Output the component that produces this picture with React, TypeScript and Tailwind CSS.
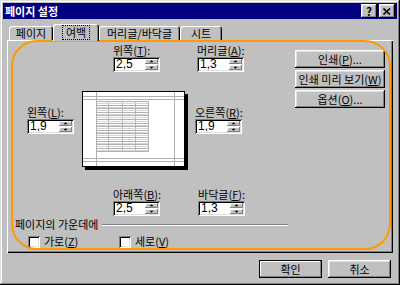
import type { ReactNode } from 'react'

// classic 3D edges
const raised =
  'shadow-[inset_-1px_-1px_0_#000,inset_1px_1px_0_#fff,inset_-2px_-2px_0_#808080,inset_2px_2px_0_#dfdfdf]'
const sunken =
  'shadow-[inset_1px_1px_0_#808080,inset_-1px_-1px_0_#fff,inset_2px_2px_0_#000,inset_-2px_-2px_0_#dfdfdf]'

function Label({ pre, mn, post = '' }: { pre: string; mn: string; post?: string }) {
  return (
    <span className="whitespace-nowrap">
      {pre}(<u>{mn}</u>){post}
    </span>
  )
}

function SpinArrows() {
  return (
    <svg width="13" height="11" viewBox="0 0 13 11" className="block">
      <rect x="0" y="0" width="13" height="5" fill="#c0c0c0" />
      <rect x="0" y="6" width="13" height="5" fill="#c0c0c0" />
      <path d="M0 4.5H12.5V0" stroke="#808080" fill="none" />
      <path d="M0 10.5H12.5V6" stroke="#808080" fill="none" />
      <path d="M0.5 4V0.5H12" stroke="#fff" fill="none" />
      <path d="M0.5 10V6.5H12" stroke="#fff" fill="none" />
      <path d="M4.5 3.2h4l-2 -2z" fill="#000" />
      <path d="M4.5 7.8h4l-2 2z" fill="#000" />
    </svg>
  )
}

function Spin({ value }: { value: string }) {
  return (
    <div className={`flex h-[15px] w-[47px] bg-white p-[2px] ${sunken}`}>
      <span className="flex-1 pl-[1px] text-[12px] leading-[11px] [font-family:'Liberation_Sans',sans-serif]">
        {value}
      </span>
      <SpinArrows />
    </div>
  )
}

function Field({ label, value }: { label: ReactNode; value: string }) {
  return (
    <div className="flex flex-col">
      <div className="h-[13px] leading-[12px]">{label}</div>
      <Spin value={value} />
    </div>
  )
}

function Button({ children, w, primary }: { children: ReactNode; w: string; primary?: boolean }) {
  return (
    <div
      className={`flex h-[18px] items-center justify-center bg-[#c0c0c0] ${w} ${
        primary
          ? 'border border-black shadow-[inset_-1px_-1px_0_#808080,inset_1px_1px_0_#fff]'
          : raised
      }`}
    >
      {children}
    </div>
  )
}

function Check({ label }: { label: ReactNode }) {
  return (
    <div className="flex items-center gap-[4px]">
      <div className={`h-[12px] w-[12px] bg-white ${sunken}`} />
      {label}
    </div>
  )
}

function Preview() {
  const rows = Array.from({ length: 15 }, (_, i) => Math.round(10 + i * 3.6) + 0.5)
  const cols = [14.5, 26.5, 40.5, 53.5, 66.5]
  return (
    <svg width="106" height="79" viewBox="0 0 106 79" className="block">
      <rect x="3" y="3" width="103" height="76" fill="#000" />
      <rect x="0.5" y="0.5" width="102" height="75" fill="#fff" stroke="#000" />
      <g stroke="#b0b0b0" strokeWidth="1">
        <line x1="1" x2="102" y1="5.5" y2="5.5" />
        <line x1="1" x2="102" y1="8.5" y2="8.5" />
        <line x1="1" x2="102" y1="67.5" y2="67.5" />
        <line x1="1" x2="102" y1="70.5" y2="70.5" />
        <line x1="14.5" x2="14.5" y1="1" y2="75" />
        <line x1="92.5" x2="92.5" y1="1" y2="75" />
        {cols.map((x) => (
          <line key={x} x1={x} x2={x} y1="10" y2="61" />
        ))}
        {rows.map((y) => (
          <line key={y} x1="14.5" x2="66.5" y1={y} y2={y} />
        ))}
      </g>
      <g stroke="#d4d4d4" strokeWidth="1">
        {rows.slice(0, -1).map((y) => (
          <line key={y} x1="15" x2="66" y1={y + 2} y2={y + 2} />
        ))}
      </g>
    </svg>
  )
}

function Tab({ children, w, active }: { children: ReactNode; w: string; active?: boolean }) {
  return (
    <div
      className={`flex items-center justify-center rounded-t-[3px] bg-[#c0c0c0] shadow-[inset_1px_1px_0_#fff,inset_-1px_0_0_#000,inset_-2px_0_0_#808080] ${w} ${
        active ? 'relative z-10 -mb-[1px] h-[17px]' : 'h-[14px]'
      }`}
    >
      {children}
    </div>
  )
}

export default function App() {
  return (
    <div className="relative h-[285px] w-[400px] overflow-hidden bg-[#c0c0c0] p-[3px] text-[11px] leading-[13px] text-black [font-family:'Noto_Sans_CJK_KR','Liberation_Sans',sans-serif] shadow-[inset_-1px_-1px_0_#000,inset_1px_1px_0_#dfdfdf,inset_-2px_-2px_0_#808080,inset_2px_2px_0_#fff]">
      {/* title bar */}
      <div className="flex h-[16px] items-center bg-[#000080] pl-[2px] pr-[2px]">
        <span className="flex-1 font-bold text-white">페이지 설정</span>
        <div className="flex gap-[2px]">
          <div className={`flex h-[14px] w-[16px] items-center justify-center bg-[#c0c0c0] font-bold ${raised}`}>?</div>
          <div className={`flex h-[14px] w-[16px] items-center justify-center bg-[#c0c0c0] ${raised}`}>
            <svg width="8" height="7" viewBox="0 0 8 7">
              <path d="M0.5 0.5L7 6.5M7 0.5L0.5 6.5" stroke="#000" strokeWidth="1.6" />
            </svg>
          </div>
        </div>
      </div>

      <div className="mx-[4px] mt-[5px]">
        {/* tabs */}
        <div className="flex h-[16px] items-end pl-[2px]">
          <Tab w="w-[44px]">페이지</Tab>
          <Tab w="w-[46px]" active>
            <span className="px-[3px] outline outline-1 outline-dotted outline-black">여백</span>
          </Tab>
          <Tab w="w-[81px]">머리글/바닥글</Tab>
          <Tab w="w-[42px]">시트</Tab>
        </div>

        {/* panel */}
        <div className="flex h-[213px] gap-[5px] pl-[8px] pt-[4px] shadow-[inset_1px_1px_0_#fff,inset_-1px_-1px_0_#000,inset_-2px_-2px_0_#808080]">
          <div className="flex w-[275px] flex-col">
            <div className="flex gap-[37px] pl-[98px]">
              <Field label={<Label pre="위쪽" mn="T" post=":" />} value="2,5" />
              <Field label={<Label pre="머리글" mn="A" post=":" />} value="1,3" />
            </div>

            <div className="mt-[19px] flex h-[80px] pl-[12px]">
              <div className="mt-[15px]">
                <Field label={<Label pre="왼쪽" mn="L" post=":" />} value="1,9" />
              </div>
              <div className="ml-[8px]">
                <Preview />
              </div>
              <div className="ml-[7px] mt-[15px]">
                <Field label={<Label pre="오른쪽" mn="R" post=":" />} value="1,9" />
              </div>
            </div>

            <div className="mt-[17px] flex gap-[37px] pl-[98px]">
              <Field label={<Label pre="아래쪽" mn="B" post=":" />} value="2,5" />
              <Field label={<Label pre="바닥글" mn="F" post=":" />} value="1,3" />
            </div>

            <div className="mt-[2px] flex items-center pr-[2px]">
              <span>페이지의 가운데에</span>
              <div className="ml-[4px] flex-1 border-t border-b border-t-[#808080] border-b-white" />
            </div>

            <div className="mt-[4px] flex pl-[13px]">
              <div className="w-[91px]">
                <Check label={<Label pre="가로" mn="Z" />} />
              </div>
              <Check label={<Label pre="세로" mn="V" />} />
            </div>
          </div>

          <div className="mt-[6px] flex flex-col gap-[2px]">
            <Button w="w-[90px]">
              <Label pre="인쇄" mn="P" post="..." />
            </Button>
            <Button w="w-[90px]">
              <Label pre="인쇄 미리 보기" mn="W" />
            </Button>
            <Button w="w-[90px]">
              <Label pre="옵션" mn="O" post="..." />
            </Button>
          </div>
        </div>
      </div>

      {/* dialog buttons */}
      <div className="mr-[6px] mt-[7px] flex justify-end gap-[6px]">
        <Button w="w-[63px]" primary>
          확인
        </Button>
        <Button w="w-[63px]">취소</Button>
      </div>

      {/* orange annotations */}
      <div className="pointer-events-none absolute left-[53px] top-[24px] h-[18px] w-[45px] rounded-[4px] border-2 border-[#ff9900]" />
      <div className="pointer-events-none absolute left-[11px] top-[40px] h-[210px] w-[380px] rounded-[26px] border-[2.5px] border-[#ff9900]" />
    </div>
  )
}
